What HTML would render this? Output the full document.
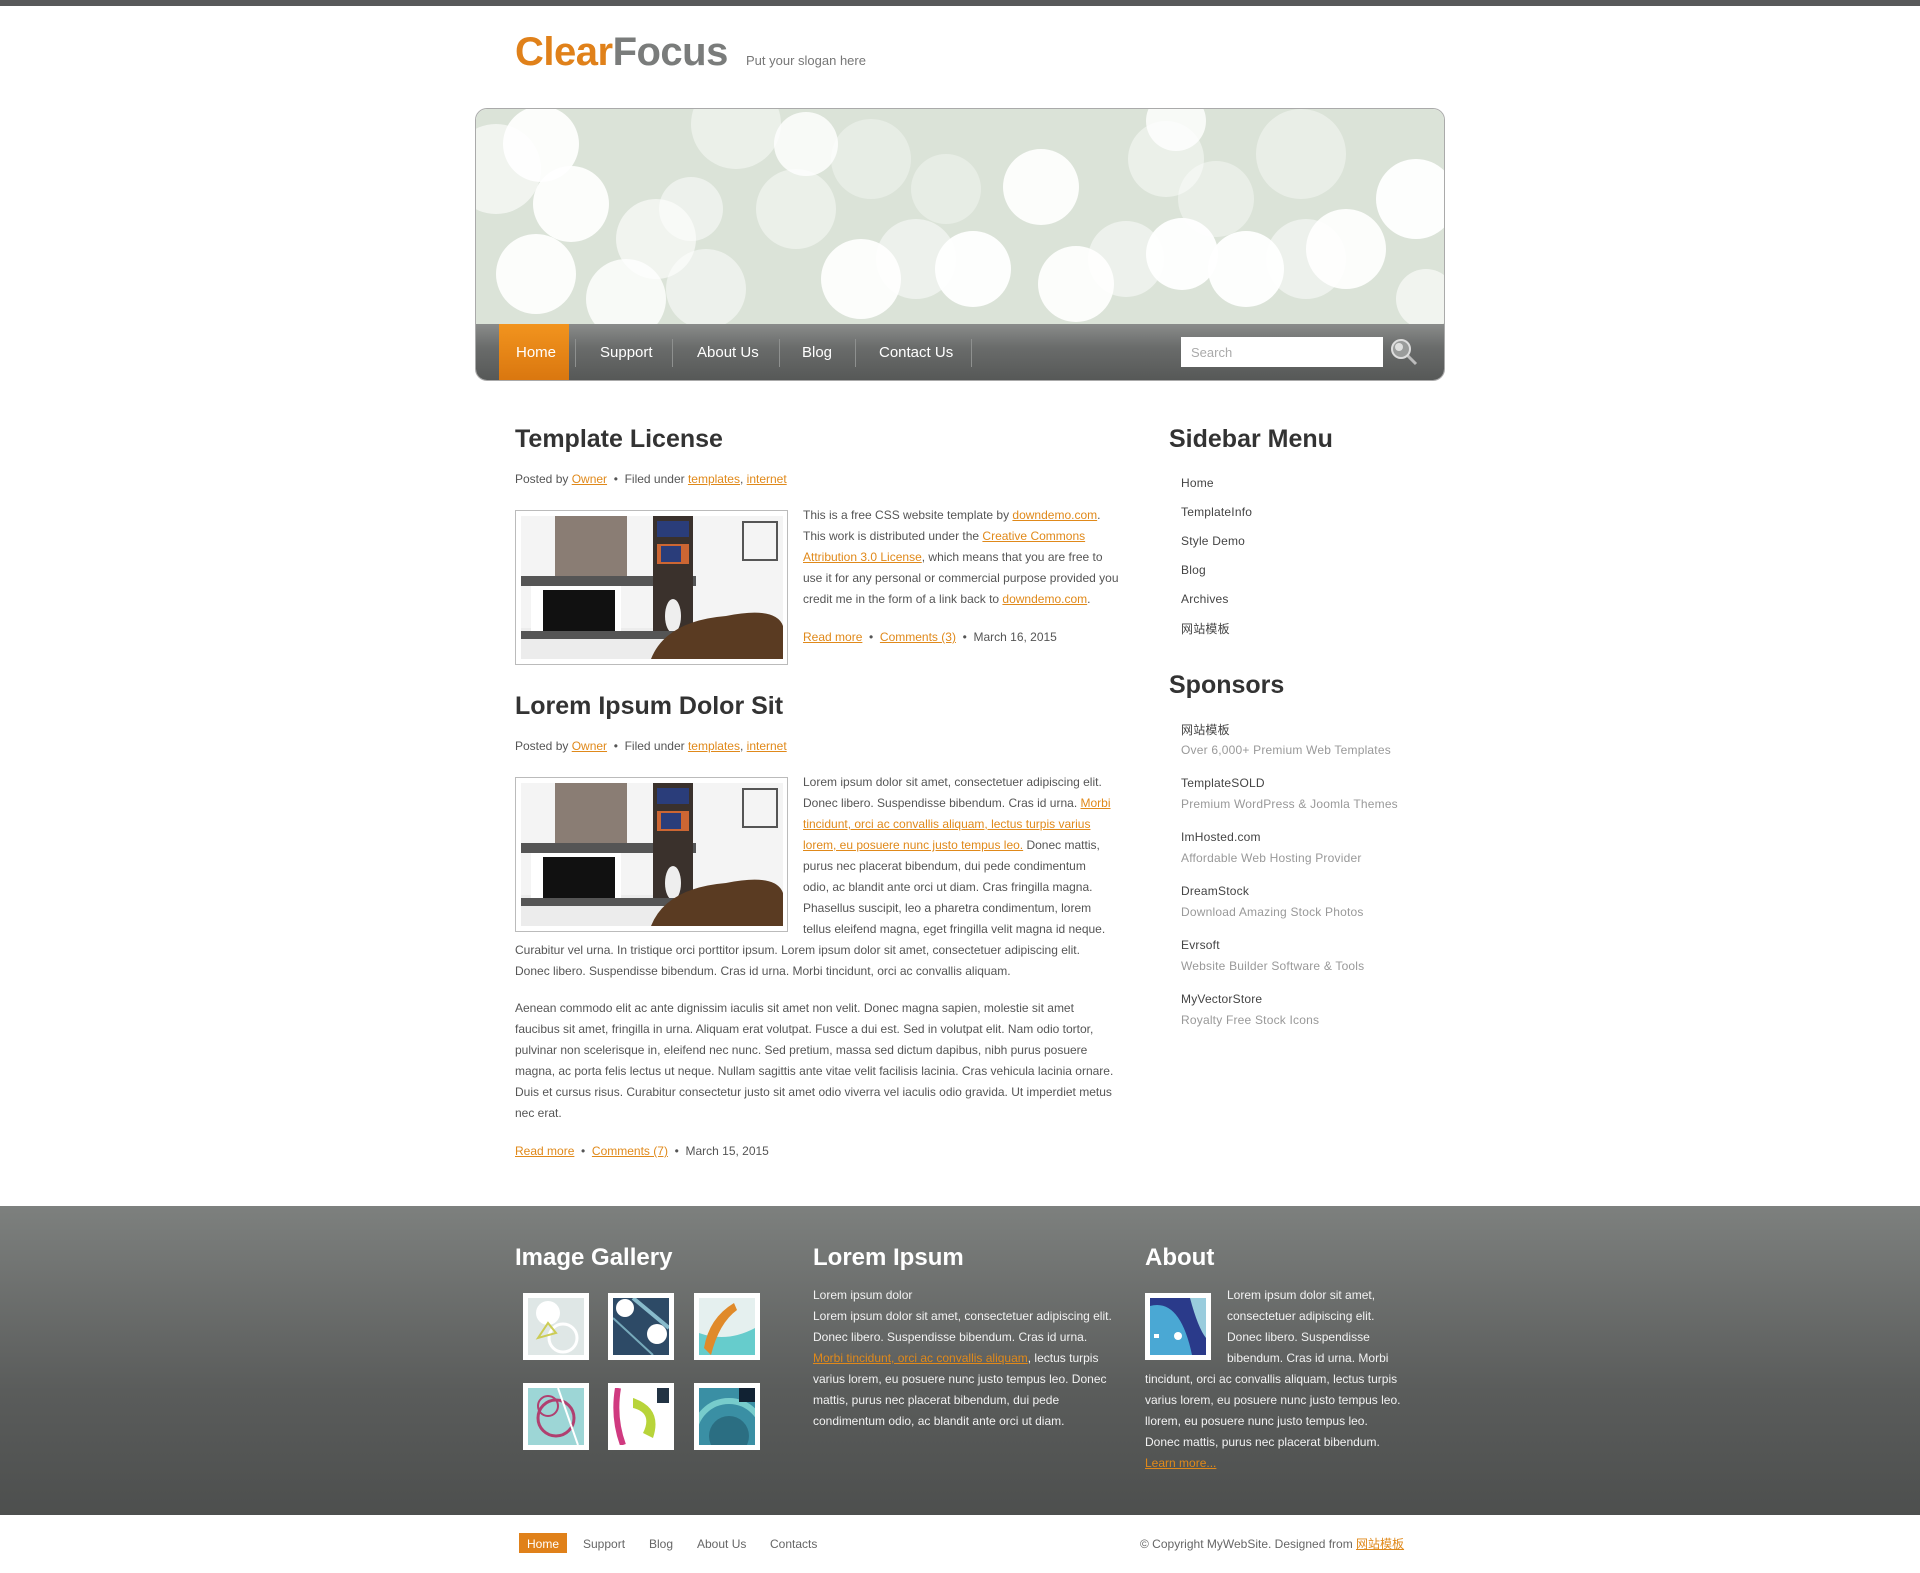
<!DOCTYPE html>
<html><head><meta charset="utf-8"><style>
*{margin:0;padding:0;box-sizing:border-box}
body{width:1920px;height:1573px;background:#fff;font-family:"Liberation Sans","Noto Sans CJK SC",sans-serif;color:#555;position:relative;overflow:hidden}
a{color:#e0891a;text-decoration:underline}
.abs{position:absolute}
.topbar{left:0;top:0;width:1920px;height:6px;background:#58595a}
.logo{left:515px;top:30px;font-size:40px;font-weight:bold;letter-spacing:-0.5px;white-space:nowrap}
.logo .c{color:#e0811a}.logo .f{color:#7a7c7b}
.slogan{left:746px;top:53px;font-size:13px;color:#777}
.header{left:475px;top:108px;width:970px;height:273px;border-radius:12px;overflow:hidden;border:1px solid #aaa}
.nav{position:absolute;left:0;top:215px;width:970px;height:58px;background:linear-gradient(#8a8c8b,#6a6c6b 40%,#555756)}
.nav .home{position:absolute;left:23px;top:0;width:70px;height:58px;background:linear-gradient(#f2941e,#d9760f)}
.nav span{position:absolute;top:20px;font-size:15px;color:#fff}
.nav i{position:absolute;top:15px;width:1px;height:28px;background:#8e908f}
.search{position:absolute;left:705px;top:13px;width:202px;height:30px;background:#fff;font-size:13px;color:#aaa;padding:8px 10px}
h2{font-size:25px;color:#333;font-weight:bold}
.meta{font-size:12px;color:#555}
.p{font-size:12px;line-height:21px;color:#555}
.imgbox{width:273px;height:155px;border:1px solid #bbb;padding:5px;background:#fff}
.sb{font-size:12px;color:#444;letter-spacing:.2px}
.sb2{font-size:12px;color:#999;letter-spacing:.2px}
.footer{left:0;top:1206px;width:1920px;height:309px;background:linear-gradient(#7d807e,#5a5c5b 60%,#4d4f4e)}
.fh{font-size:24px;color:#fff;font-weight:bold}
.fp{font-size:12px;line-height:21px;color:#f2f2f2}
.thumb{width:66px;height:67px;background:#fff;padding:5px}
.bl{font-size:12px;color:#666}
</style></head><body>
<div class="abs topbar"></div>
<div class="abs logo"><span class="c">Clear</span><span class="f">Focus</span></div>
<div class="abs slogan">Put your slogan here</div>

<div class="abs header">
<svg width="970" height="216" style="position:absolute;left:0;top:0">
<rect width="970" height="216" fill="#dbe3d8"/>
<g fill="#fff">
<circle cx="20" cy="60" r="45" opacity=".6"/><circle cx="65" cy="35" r="38" opacity=".9"/><circle cx="95" cy="95" r="38" opacity=".9"/><circle cx="60" cy="165" r="40" opacity=".9"/><circle cx="150" cy="190" r="40" opacity=".8"/><circle cx="180" cy="130" r="40" opacity=".6"/><circle cx="230" cy="180" r="40" opacity=".5"/><circle cx="215" cy="100" r="32" opacity=".5"/><circle cx="260" cy="15" r="45" opacity=".45"/><circle cx="320" cy="100" r="40" opacity=".45"/><circle cx="330" cy="35" r="32" opacity=".8"/><circle cx="395" cy="50" r="40" opacity=".35"/><circle cx="385" cy="170" r="40" opacity=".9"/><circle cx="440" cy="150" r="40" opacity=".5"/><circle cx="470" cy="80" r="35" opacity=".35"/><circle cx="497" cy="160" r="38" opacity=".95"/><circle cx="565" cy="78" r="38" opacity=".9"/><circle cx="600" cy="175" r="38" opacity=".9"/><circle cx="650" cy="150" r="38" opacity=".5"/><circle cx="690" cy="50" r="38" opacity=".45"/><circle cx="706" cy="145" r="36" opacity=".95"/><circle cx="740" cy="90" r="38" opacity=".4"/><circle cx="770" cy="160" r="38" opacity=".95"/><circle cx="825" cy="45" r="45" opacity=".4"/><circle cx="830" cy="150" r="40" opacity=".5"/><circle cx="870" cy="140" r="40" opacity=".9"/><circle cx="940" cy="90" r="40" opacity=".95"/><circle cx="950" cy="190" r="30" opacity=".6"/><circle cx="700" cy="12" r="30" opacity=".8"/>
</g></svg>
<div class="nav">
<div class="home"></div>
<span style="left:40px">Home</span><i style="left:99px"></i>
<span style="left:124px">Support</span><i style="left:196px"></i>
<span style="left:221px">About Us</span><i style="left:303px"></i>
<span style="left:326px">Blog</span><i style="left:379px"></i>
<span style="left:403px">Contact Us</span><i style="left:495px"></i>
<div class="search">Search</div>
<svg style="position:absolute;left:914px;top:13px" width="32" height="32"><line x1="16" y1="17" x2="26" y2="27" stroke="#bbb" stroke-width="3"/><circle cx="11" cy="12" r="9" fill="#9a9c9b" stroke="#ddd" stroke-width="2"/><circle cx="9" cy="10" r="4" fill="#dfe0df"/></svg>
</div>
</div>

<!-- post 1 -->
<h2 class="abs" style="left:515px;top:425px">Template License</h2>
<div class="abs meta" style="left:515px;top:472px">Posted by <a>Owner</a> &nbsp;•&nbsp; Filed under <a>templates</a>, <a>internet</a></div>
<div class="abs imgbox" style="left:515px;top:510px">
<svg width="262" height="143"><rect width="262" height="143" fill="#ececec"/><rect x="0" y="0" width="262" height="112" fill="#f4f4f4"/><rect x="34" y="0" width="72" height="60" fill="#8a7d74"/><rect x="0" y="60" width="175" height="10" fill="#555"/><rect x="10" y="70" width="90" height="52" fill="#fff"/><rect x="22" y="74" width="72" height="48" fill="#111"/><rect x="132" y="0" width="40" height="122" fill="#3a312c"/><rect x="136" y="5" width="32" height="16" fill="#2a3d7a"/><rect x="136" y="28" width="32" height="20" fill="#c63"/><rect x="140" y="30" width="20" height="16" fill="#2a3d7a"/><ellipse cx="152" cy="100" rx="8" ry="17" fill="#eee"/><rect x="0" y="115" width="175" height="8" fill="#555"/><rect x="222" y="6" width="34" height="38" fill="none" stroke="#555" stroke-width="2"/><path d="M130 143 Q145 105 205 100 Q255 90 262 110 L262 143Z" fill="#5a3b22"/></svg>
</div>
<div class="abs p" style="left:803px;top:505px;width:320px">This is a free CSS website template by <a>downdemo.com</a>. This work is distributed under the <a>Creative Commons Attribution 3.0 License</a>, which means that you are free to use it for any personal or commercial purpose provided you credit me in the form of a link back to <a>downdemo.com</a>.</div>
<div class="abs meta" style="left:803px;top:630px"><a>Read more</a> &nbsp;•&nbsp; <a>Comments (3)</a> &nbsp;•&nbsp; March 16, 2015</div>

<!-- post 2 -->
<h2 class="abs" style="left:515px;top:692px">Lorem Ipsum Dolor Sit</h2>
<div class="abs meta" style="left:515px;top:739px">Posted by <a>Owner</a> &nbsp;•&nbsp; Filed under <a>templates</a>, <a>internet</a></div>
<div class="abs imgbox" style="left:515px;top:777px">
<svg width="262" height="143"><rect width="262" height="143" fill="#ececec"/><rect x="0" y="0" width="262" height="112" fill="#f4f4f4"/><rect x="34" y="0" width="72" height="60" fill="#8a7d74"/><rect x="0" y="60" width="175" height="10" fill="#555"/><rect x="10" y="70" width="90" height="52" fill="#fff"/><rect x="22" y="74" width="72" height="48" fill="#111"/><rect x="132" y="0" width="40" height="122" fill="#3a312c"/><rect x="136" y="5" width="32" height="16" fill="#2a3d7a"/><rect x="136" y="28" width="32" height="20" fill="#c63"/><rect x="140" y="30" width="20" height="16" fill="#2a3d7a"/><ellipse cx="152" cy="100" rx="8" ry="17" fill="#eee"/><rect x="0" y="115" width="175" height="8" fill="#555"/><rect x="222" y="6" width="34" height="38" fill="none" stroke="#555" stroke-width="2"/><path d="M130 143 Q145 105 205 100 Q255 90 262 110 L262 143Z" fill="#5a3b22"/></svg>
</div>
<div class="abs p" style="left:803px;top:772px;width:310px">Lorem ipsum dolor sit amet, consectetuer adipiscing elit. Donec libero. Suspendisse bibendum. Cras id urna. <a>Morbi tincidunt, orci ac convallis aliquam, lectus turpis varius lorem, eu posuere nunc justo tempus leo.</a> Donec mattis, purus nec placerat bibendum, dui pede condimentum odio, ac blandit ante orci ut diam. Cras fringilla magna. Phasellus suscipit, leo a pharetra condimentum, lorem tellus eleifend magna, eget fringilla velit magna id neque.</div>
<div class="abs p" style="left:515px;top:940px;width:600px">Curabitur vel urna. In tristique orci porttitor ipsum. Lorem ipsum dolor sit amet, consectetuer adipiscing elit. Donec libero. Suspendisse bibendum. Cras id urna. Morbi tincidunt, orci ac convallis aliquam.</div>
<div class="abs p" style="left:515px;top:998px;width:600px">Aenean commodo elit ac ante dignissim iaculis sit amet non velit. Donec magna sapien, molestie sit amet faucibus sit amet, fringilla in urna. Aliquam erat volutpat. Fusce a dui est. Sed in volutpat elit. Nam odio tortor, pulvinar non scelerisque in, eleifend nec nunc. Sed pretium, massa sed dictum dapibus, nibh purus posuere magna, ac porta felis lectus ut neque. Nullam sagittis ante vitae velit facilisis lacinia. Cras vehicula lacinia ornare. Duis et cursus risus. Curabitur consectetur justo sit amet odio viverra vel iaculis odio gravida. Ut imperdiet metus nec erat.</div>
<div class="abs meta" style="left:515px;top:1144px"><a>Read more</a> &nbsp;•&nbsp; <a>Comments (7)</a> &nbsp;•&nbsp; March 15, 2015</div>

<!-- sidebar -->
<h2 class="abs" style="left:1169px;top:425px">Sidebar Menu</h2>
<div class="abs sb" style="left:1181px;top:476px">Home</div>
<div class="abs sb" style="left:1181px;top:505px">TemplateInfo</div>
<div class="abs sb" style="left:1181px;top:534px">Style Demo</div>
<div class="abs sb" style="left:1181px;top:563px">Blog</div>
<div class="abs sb" style="left:1181px;top:592px">Archives</div>
<div class="abs sb" style="left:1181px;top:620px">网站模板</div>
<h2 class="abs" style="left:1169px;top:671px">Sponsors</h2>
<div class="abs sb" style="left:1181px;top:721px">网站模板</div><div class="abs sb2" style="left:1181px;top:743px">Over 6,000+ Premium Web Templates</div>
<div class="abs sb" style="left:1181px;top:776px">TemplateSOLD</div><div class="abs sb2" style="left:1181px;top:797px">Premium WordPress &amp; Joomla Themes</div>
<div class="abs sb" style="left:1181px;top:830px">ImHosted.com</div><div class="abs sb2" style="left:1181px;top:851px">Affordable Web Hosting Provider</div>
<div class="abs sb" style="left:1181px;top:884px">DreamStock</div><div class="abs sb2" style="left:1181px;top:905px">Download Amazing Stock Photos</div>
<div class="abs sb" style="left:1181px;top:938px">Evrsoft</div><div class="abs sb2" style="left:1181px;top:959px">Website Builder Software &amp; Tools</div>
<div class="abs sb" style="left:1181px;top:992px">MyVectorStore</div><div class="abs sb2" style="left:1181px;top:1013px">Royalty Free Stock Icons</div>

<!-- footer -->
<div class="abs footer"></div>
<div class="abs fh" style="left:515px;top:1244px">Image Gallery</div>
<div class="abs fh" style="left:813px;top:1244px">Lorem Ipsum</div>
<div class="abs fh" style="left:1145px;top:1244px">About</div>

<div class="abs thumb" style="left:523px;top:1293px"><svg width="56" height="57"><rect width="56" height="57" fill="#dfe7e6"/><circle cx="20" cy="15" r="12" fill="#fff"/><circle cx="35" cy="40" r="14" fill="none" stroke="#fff" stroke-width="3"/><path d="M10 40 L20 25 L28 35Z" fill="none" stroke="#cc5" stroke-width="2"/></svg></div>
<div class="abs thumb" style="left:608px;top:1293px"><svg width="56" height="57"><rect width="56" height="57" fill="#2d4a66"/><circle cx="12" cy="10" r="9" fill="#fff"/><circle cx="44" cy="36" r="10" fill="#fff"/><line x1="0" y1="20" x2="40" y2="57" stroke="#7ab" stroke-width="2"/><line x1="20" y1="0" x2="56" y2="30" stroke="#8bc" stroke-width="4"/></svg></div>
<div class="abs thumb" style="left:694px;top:1293px"><svg width="56" height="57"><rect width="56" height="57" fill="#e5f0ef"/><path d="M0 35 Q28 45 56 30 L56 57 L0 57Z" fill="#6cc"/><path d="M5 50 Q10 20 35 5 L38 12 Q20 25 12 57Z" fill="#e08a2a"/></svg></div>
<div class="abs thumb" style="left:523px;top:1383px"><svg width="56" height="57"><rect width="56" height="57" fill="#9dd6d6"/><circle cx="28" cy="30" r="18" fill="none" stroke="#b04070" stroke-width="3"/><circle cx="20" cy="18" r="10" fill="none" stroke="#b04070" stroke-width="2"/><line x1="30" y1="0" x2="50" y2="57" stroke="#fff" stroke-width="2"/></svg></div>
<div class="abs thumb" style="left:608px;top:1383px"><svg width="56" height="57"><rect width="56" height="57" fill="#fff"/><path d="M5 0 Q0 30 10 57" stroke="#d03a80" stroke-width="6" fill="none"/><path d="M20 10 Q50 20 40 50 L30 45 Q40 25 20 20Z" fill="#b8d43a"/><rect x="44" y="0" width="12" height="15" fill="#234"/></svg></div>
<div class="abs thumb" style="left:694px;top:1383px"><svg width="56" height="57"><rect width="56" height="57" fill="#3a8fa4"/><circle cx="30" cy="48" r="35" fill="none" stroke="#7cc" stroke-width="6"/><circle cx="30" cy="48" r="20" fill="#2b6e82"/><rect x="40" y="0" width="16" height="14" fill="#123"/></svg></div>

<div class="abs fp" style="left:813px;top:1285px;width:300px">Lorem ipsum dolor<br>Lorem ipsum dolor sit amet, consectetuer adipiscing elit. Donec libero. Suspendisse bibendum. Cras id urna. <a>Morbi tincidunt, orci ac convallis aliquam</a>, lectus turpis varius lorem, eu posuere nunc justo tempus leo. Donec mattis, purus nec placerat bibendum, dui pede condimentum odio, ac blandit ante orci ut diam.</div>

<div class="abs thumb" style="left:1145px;top:1293px"><svg width="56" height="57"><rect width="56" height="57" fill="#4aa8d4"/><path d="M0 8 Q30 0 42 57 L56 57 L56 0 L0 0Z" fill="#2a3a8a"/><path d="M40 0 Q48 30 56 40 L56 0Z" fill="#9cd"/><circle cx="28" cy="38" r="4" fill="#fff"/><rect x="4" y="36" width="5" height="4" fill="#fff"/></svg></div>
<div class="abs fp" style="left:1145px;top:1285px;width:258px"><div style="float:left;width:82px;height:84px"></div>Lorem ipsum dolor sit amet, consectetuer adipiscing elit. Donec libero. Suspendisse bibendum. Cras id urna. Morbi tincidunt, orci ac convallis aliquam, lectus turpis varius lorem, eu posuere nunc justo tempus leo. llorem, eu posuere nunc justo tempus leo. Donec mattis, purus nec placerat bibendum.<br><a>Learn more...</a></div>

<!-- bottom -->
<div class="abs" style="left:519px;top:1533px;width:48px;height:20px;background:#e0811a"></div>
<div class="abs bl" style="left:527px;top:1537px;color:#fff">Home</div>
<div class="abs bl" style="left:583px;top:1537px">Support</div>
<div class="abs bl" style="left:649px;top:1537px">Blog</div>
<div class="abs bl" style="left:697px;top:1537px">About Us</div>
<div class="abs bl" style="left:770px;top:1537px">Contacts</div>
<div class="abs bl" style="left:1140px;top:1535px">© Copyright MyWebSite. Designed from <a>网站模板</a></div>
</body></html>
